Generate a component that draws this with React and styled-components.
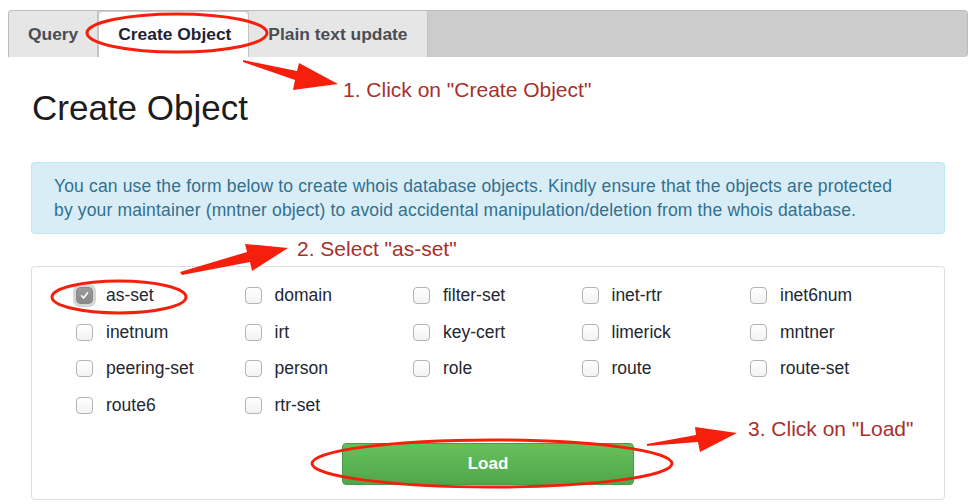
import React from "react";
import styled, { createGlobalStyle } from "styled-components";

const Global = createGlobalStyle`
  html, body { margin: 0; padding: 0; background: #fff; }
  body { font-family: "Liberation Sans", Arial, Helvetica, sans-serif; color: #333; }
`;

const Page = styled.div`
  position: relative;
  width: 974px;
  height: 504px;
  overflow: hidden;
  padding-top: 10px;
  box-sizing: border-box;
`;

const TabBar = styled.div`
  display: flex;
  align-items: stretch;
  margin: 0 6px 0 8px;
  height: 47px;
  box-sizing: border-box;
  background: #cccccc;
  border: 1px solid #bcbcbc;
  border-bottom: none;
  border-radius: 4px 4px 4px 0;
  overflow: hidden;
`;

const Tab = styled.div`
  display: flex;
  align-items: center;
  padding-left: ${(p) => (p.$active ? "19px" : "19px")};
  padding-right: ${(p) => (p.$active ? "17px" : "19px")};
  margin-top: ${(p) => (p.$active ? "1px" : "0")};
  font-size: 17.4px;
  font-weight: bold;
  color: ${(p) => (p.$active ? "#1f2433" : "#4a4d55")};
  background: ${(p) => (p.$active ? "#ffffff" : "#e6e6e6")};
  border-right: 1px solid #c4c4c4;
  border-left: ${(p) => (p.$active ? "1px solid #c4c4c4" : "none")};
  border-radius: ${(p) => (p.$active ? "4px 4px 0 0" : "0")};
  white-space: nowrap;
`;

const Content = styled.div`
  padding: 0 29px 0 31px;
`;

const Heading = styled.h1`
  margin: 32px 0 0 1px;
  font-size: 35px;
  line-height: 38px;
  font-weight: normal;
  color: #1c1c1c;
`;

const Alert = styled.div`
  margin-top: 35px;
  padding: 11px 22px;
  background: #d9edf7;
  border: 1px solid #bce8f1;
  border-radius: 4px;
  color: #31708f;
  font-size: 17.5px;
  letter-spacing: 0.15px;
  line-height: 24px;
  white-space: nowrap;
`;

const Panel = styled.div`
  margin-top: 32px;
  height: 234px;
  box-sizing: border-box;
  border: 1px solid #dddddd;
  border-radius: 4px;
  padding: 10px 0 0 0;
  display: flex;
  flex-direction: column;
  align-items: center;
`;

const Grid = styled.div`
  align-self: stretch;
  display: grid;
  grid-template-columns: repeat(5, 168.5px);
  grid-auto-rows: 36.7px;
  padding-left: 44px;
`;

const Option = styled.label`
  display: flex;
  align-items: center;
  gap: 13px;
  font-size: 17.5px;
  color: #222731;
`;

const Box = styled.span`
  position: relative;
  width: 17px;
  height: 17px;
  box-sizing: border-box;
  border-radius: 4px;
  border: 1px solid ${(p) => (p.$checked ? "#8a8a8a" : "#b3b3b3")};
  background: ${(p) =>
    p.$checked ? "linear-gradient(#9a9a9a, #888888)" : "linear-gradient(#ffffff, #f3f3f3)"};
  box-shadow: ${(p) => (p.$checked ? "0 0 0 3px #d6d6d6" : "none")};
  display: flex;
  align-items: center;
  justify-content: center;
  flex: none;
`;

const LoadButton = styled.button`
  margin-top: 19px;
  width: 292px;
  height: 42px;
  border: 1px solid #4a9a48;
  border-radius: 4px;
  background: linear-gradient(#66c05a, #50a74a);
  color: #ffffff;
  font-family: inherit;
  font-size: 17px;
  font-weight: bold;
  cursor: pointer;
`;

const Overlay = styled.svg`
  position: absolute;
  left: 0;
  top: 0;
  pointer-events: none;
`;

const Note = styled.div`
  position: absolute;
  left: ${(p) => p.$x}px;
  top: ${(p) => p.$y}px;
  font-size: 21px;
  line-height: 24px;
  color: #a8302c;
  white-space: nowrap;
`;

const options = [
  "as-set", "domain", "filter-set", "inet-rtr", "inet6num",
  "inetnum", "irt", "key-cert", "limerick", "mntner",
  "peering-set", "person", "role", "route", "route-set",
  "route6", "rtr-set",
];

function Check({ checked }) {
  return (
    <Box $checked={checked}>
      {checked && (
        <svg width="11" height="11" viewBox="0 0 11 11">
          <path d="M2.5 5.8 L4.6 8 L8.6 2.8" fill="none" stroke="#fff" strokeWidth="1.6" strokeLinecap="round" strokeLinejoin="round" />
        </svg>
      )}
    </Box>
  );
}

export default function App() {
  const red = "#f51f0c";
  return (
    <>
      <Global />
      <Page>
        <TabBar>
          <Tab>Query</Tab>
          <Tab $active>Create Object</Tab>
          <Tab>Plain text update</Tab>
        </TabBar>
        <Content>
          <Heading>Create Object</Heading>
          <Alert>
            You can use the form below to create whois database objects. Kindly ensure that the objects are protected
            <br />
            by your maintainer (mntner object) to avoid accidental manipulation/deletion from the whois database.
          </Alert>
          <Panel>
            <Grid>
              {options.map((o, i) => (
                <Option key={o}>
                  <Check checked={i === 0} />
                  {o}
                </Option>
              ))}
            </Grid>
            <LoadButton>Load</LoadButton>
          </Panel>
        </Content>

        <Overlay width="974" height="504" viewBox="0 0 974 504">
          <ellipse cx="177" cy="33" rx="90" ry="19" fill="none" stroke={red} strokeWidth="3" />
          <ellipse cx="119" cy="297" rx="67" ry="16" fill="none" stroke={red} strokeWidth="3" />
          <ellipse cx="492" cy="463.5" rx="180" ry="23.5" fill="none" stroke={red} strokeWidth="3" />
          <polygon points="243,60 297,71 299,63 338,84 293,90 295,80 243,62" fill={red} />
          <polygon points="180,272 247,252 245,244 288,248 252,271 250,262 182,275" fill={red} />
          <polygon points="647,444 696,435 695,427 737,433 700,452 698,442 647,446" fill={red} />
        </Overlay>
        <Note $x={343} $y={78}>1. Click on "Create Object"</Note>
        <Note $x={297} $y={237}>2. Select "as-set"</Note>
        <Note $x={748} $y={417}>3. Click on "Load"</Note>
      </Page>
    </>
  );
}
